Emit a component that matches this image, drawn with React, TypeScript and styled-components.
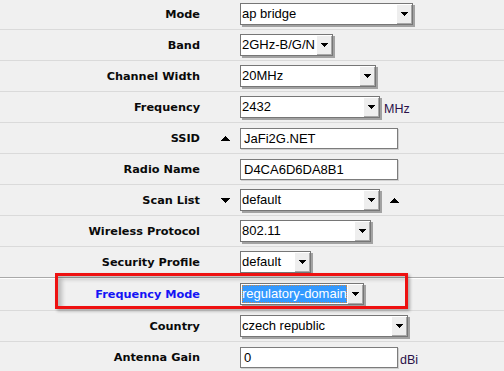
import React from 'react';
import styled, { createGlobalStyle, css } from 'styled-components';

const GlobalStyle = createGlobalStyle`
  html, body {
    margin: 0;
    padding: 0;
    background: #f0f0f0;
    overflow: hidden;
  }
`;

const Page = styled.div`
  position: relative;
  width: 504px;
  height: 371px;
  overflow: hidden;
  background: #f0f0f0;
`;

const Form = styled.div`
  display: flex;
  flex-direction: column;
  margin-top: -1px;
`;

type RowProps = {
  $h?: number;
  $strong?: boolean;
};

const Row = styled.div<RowProps>`
  display: grid;
  grid-template-columns: 200px 40px 1fr;
  align-items: center;
  height: ${(p) => p.$h ?? 30}px;
  border-bottom: 1px solid #dadada;

  ${(p) =>
    p.$strong &&
    css`
      border-bottom-color: #a9a9a9;
      box-shadow: 0 1px 0 #ffffff;
    `}
`;

const Label = styled.div<{ $active?: boolean }>`
  font-family: 'DejaVu Sans', Verdana, sans-serif;
  font-weight: bold;
  font-size: 11.3px;
  text-align: right;
  white-space: nowrap;
  color: ${(p) => (p.$active ? '#1414f5' : '#0a0a0a')};
`;

const Marker = styled.div`
  display: flex;
  justify-content: flex-end;
  padding-right: 10px;
`;

const Controls = styled.div`
  display: flex;
  align-items: center;
`;

const SelectBox = styled.div<{ $w: number }>`
  display: flex;
  width: ${(p) => p.$w}px;
  height: 22px;
  box-sizing: border-box;
  border: 1px solid #767676;
  background: #ffffff;
  box-shadow: 2px 2px 0 #a2a2a2;
`;

const Value = styled.div<{ $focused?: boolean }>`
  flex: 1;
  min-width: 0;
  padding-left: 1px;
  font-family: 'Liberation Sans', Arial, sans-serif;
  font-size: 13px;
  line-height: 20px;
  color: #000;
  white-space: nowrap;
  overflow: hidden;

  ${(p) =>
    p.$focused &&
    css`
      margin: 1px 0 1px 1px;
      padding-left: 0;
      line-height: 18px;
      background: #3399ff;
      color: #ffffff;
      outline: 1px dotted #c8874a;
      outline-offset: -1px;
    `}
`;

const ArrowButton = styled.div`
  display: flex;
  align-items: center;
  justify-content: center;
  flex: 0 0 16px;
  background: #eeeeee;
  box-shadow: inset 1px 1px 0 #ffffff, inset -1px -1px 0 #a8a8a8;
`;

const TextBox = styled.div`
  width: 158px;
  height: 21px;
  box-sizing: border-box;
  border: 1px solid #7c7c7c;
  background: #ffffff;
  padding-left: 3px;
  font-family: 'Liberation Sans', Arial, sans-serif;
  font-size: 13px;
  line-height: 19px;
  color: #000;
  box-shadow: 1px 1px 0 #d0d0d0;
`;

const Unit = styled.span<{ $gap: number }>`
  font-family: 'Liberation Sans', Arial, sans-serif;
  font-size: 12.5px;
  color: #2a1048;
  margin-left: ${(p) => p.$gap}px;
  padding-top: 4px;
`;

const After = styled.span`
  display: flex;
  margin-left: 10px;
`;

const Highlight = styled.div`
  position: absolute;
  left: 55px;
  top: 273px;
  width: 353px;
  height: 36px;
  box-sizing: border-box;
  border: 3px solid #ee1111;
  box-shadow: inset 4px 3px 4px rgba(0, 0, 0, 0.22), 2px 2px 3px rgba(0, 0, 0, 0.3);
  pointer-events: none;
`;

const Arrow = () => (
  <svg width="7" height="4" viewBox="0 0 7 4" shapeRendering="crispEdges">
    <path d="M0 0h7v1H0z M1 1h5v1H1z M2 2h3v1H2z M3 3h1v1H3z" fill="#000" />
  </svg>
);

const Triangle = ({ up }: { up?: boolean }) => (
  <svg width="9" height="5" viewBox="0 0 9 5" shapeRendering="crispEdges">
    <path
      d={up ? 'M4 0h1v1H4z M3 1h3v1H3z M2 2h5v1H2z M1 3h7v1H1z M0 4h9v1H0z' : 'M0 0h9v1H0z M1 1h7v1H1z M2 2h5v1H2z M3 3h3v1H3z M4 4h1v1H4z'}
      fill="#000"
    />
  </svg>
);

type SelectProps = {
  value: string;
  width: number;
  focused?: boolean;
};

const Select = ({ value, width, focused }: SelectProps) => (
  <SelectBox $w={width}>
    <Value $focused={focused}>{value}</Value>
    <ArrowButton>
      <Arrow />
    </ArrowButton>
  </SelectBox>
);

type Field = {
  label: string;
  kind: 'select' | 'text';
  value: string;
  width?: number;
  unit?: string;
  marker?: 'up' | 'down';
  after?: boolean;
  active?: boolean;
  h?: number;
  strong?: boolean;
};

const fields: Field[] = [
  { label: 'Mode', kind: 'select', value: 'ap bridge', width: 173 },
  { label: 'Band', kind: 'select', value: '2GHz-B/G/N', width: 93 },
  { label: 'Channel Width', kind: 'select', value: '20MHz', width: 136 },
  { label: 'Frequency', kind: 'select', value: '2432', width: 140, unit: 'MHz' },
  { label: 'SSID', kind: 'text', value: 'JaFi2G.NET', marker: 'up' },
  { label: 'Radio Name', kind: 'text', value: 'D4CA6D6DA8B1' },
  { label: 'Scan List', kind: 'select', value: 'default', width: 140, marker: 'down', after: true },
  { label: 'Wireless Protocol', kind: 'select', value: '802.11', width: 131 },
  { label: 'Security Profile', kind: 'select', value: 'default', width: 71, strong: true },
  { label: 'Frequency Mode', kind: 'select', value: 'regulatory-domain', width: 124, active: true, h: 32 },
  { label: 'Country', kind: 'select', value: 'czech republic', width: 168 },
  { label: 'Antenna Gain', kind: 'text', value: '0', unit: 'dBi', h: 31 },
];

export default function App() {
  return (
    <Page>
      <GlobalStyle />
      <Form>
        {fields.map((f) => (
          <Row key={f.label} $h={f.h} $strong={f.strong}>
            <Label $active={f.active}>{f.label}</Label>
            <Marker>{f.marker && <Triangle up={f.marker === 'up'} />}</Marker>
            <Controls>
              {f.kind === 'select' ? (
                <Select value={f.value} width={f.width ?? 140} focused={f.active} />
              ) : (
                <TextBox>{f.value}</TextBox>
              )}
              {f.unit && <Unit $gap={f.kind === 'select' ? 4 : 2}>{f.unit}</Unit>}
              {f.after && (
                <After>
                  <Triangle up />
                </After>
              )}
            </Controls>
          </Row>
        ))}
      </Form>
      <Highlight />
    </Page>
  );
}
